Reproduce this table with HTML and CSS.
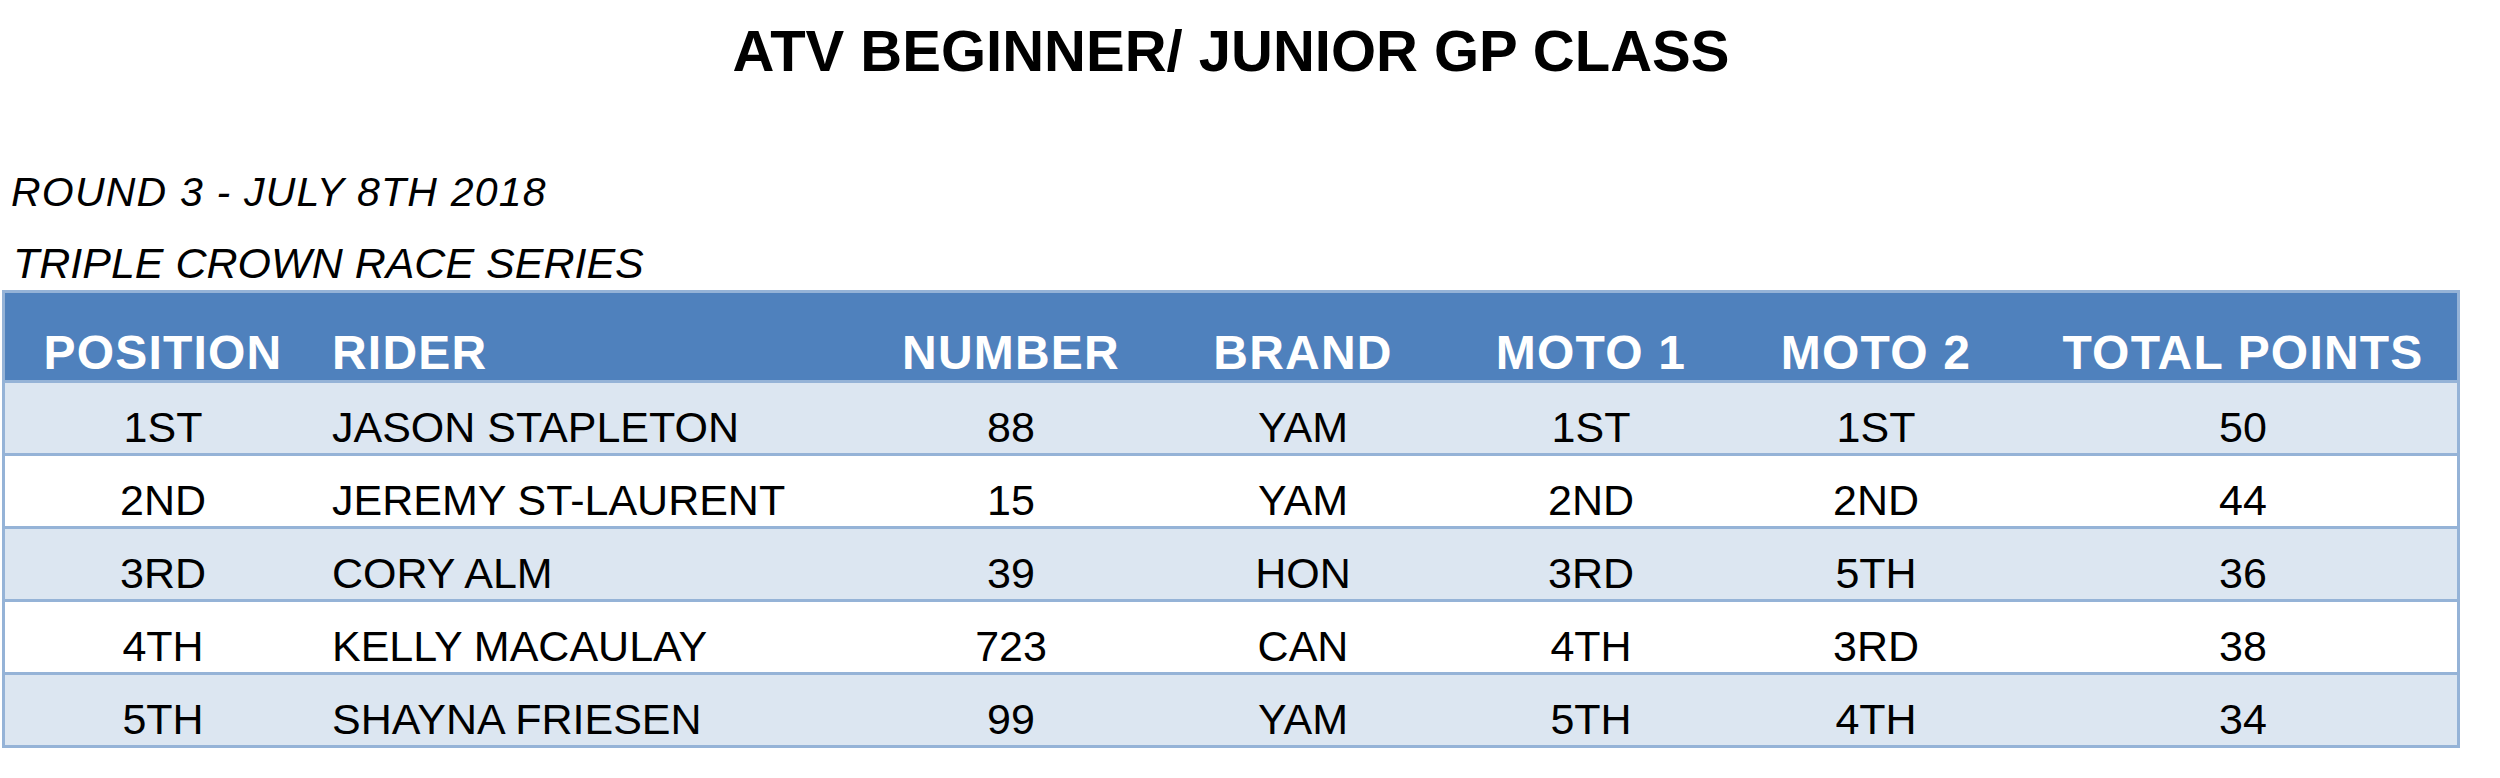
FILE: index.html
```html
<!DOCTYPE html>
<html lang="en">
<head>
<meta charset="utf-8">
<title>ATV Beginner/ Junior GP Class</title>
<link rel="stylesheet" href="styles.css">
</head>
<body>
<div class="page">
  <h1 class="title">ATV BEGINNER/ JUNIOR GP CLASS</h1>
  <p class="sub sub-round">ROUND 3 - JULY 8TH 2018</p>
  <p class="sub sub-series">TRIPLE CROWN RACE SERIES</p>
  <div class="results">
    <div class="row head">
      <div class="cell c">POSITION</div>
      <div class="cell l">RIDER</div>
      <div class="cell c">NUMBER</div>
      <div class="cell c">BRAND</div>
      <div class="cell c">MOTO 1</div>
      <div class="cell c">MOTO 2</div>
      <div class="cell c last">TOTAL POINTS</div>
    </div>
    <div class="row body alt">
      <div class="cell c">1ST</div>
      <div class="cell l">JASON STAPLETON</div>
      <div class="cell c">88</div>
      <div class="cell c">YAM</div>
      <div class="cell c">1ST</div>
      <div class="cell c">1ST</div>
      <div class="cell c last">50</div>
    </div>
    <div class="row body">
      <div class="cell c">2ND</div>
      <div class="cell l">JEREMY ST-LAURENT</div>
      <div class="cell c">15</div>
      <div class="cell c">YAM</div>
      <div class="cell c">2ND</div>
      <div class="cell c">2ND</div>
      <div class="cell c last">44</div>
    </div>
    <div class="row body alt">
      <div class="cell c">3RD</div>
      <div class="cell l">CORY ALM</div>
      <div class="cell c">39</div>
      <div class="cell c">HON</div>
      <div class="cell c">3RD</div>
      <div class="cell c">5TH</div>
      <div class="cell c last">36</div>
    </div>
    <div class="row body">
      <div class="cell c">4TH</div>
      <div class="cell l">KELLY MACAULAY</div>
      <div class="cell c">723</div>
      <div class="cell c">CAN</div>
      <div class="cell c">4TH</div>
      <div class="cell c">3RD</div>
      <div class="cell c last">38</div>
    </div>
    <div class="row body alt">
      <div class="cell c">5TH</div>
      <div class="cell l">SHAYNA FRIESEN</div>
      <div class="cell c">99</div>
      <div class="cell c">YAM</div>
      <div class="cell c">5TH</div>
      <div class="cell c">4TH</div>
      <div class="cell c last">34</div>
    </div>
  </div>
</div>
</body>
</html>
```
FILE: styles.css
```css
html, body {
  margin: 0;
  padding: 0;
  background: #ffffff;
}

body {
  font-family: "Liberation Sans", Arial, sans-serif;
  color: #000000;
}

.page {
  width: 2458px;
  margin-left: 2px;
  display: flex;
  flex-direction: column;
}

.title {
  margin: 22px 0 0 0;
  font-size: 58px;
  line-height: 58px;
  font-weight: bold;
  text-align: center;
}

.sub {
  margin: 0;
  padding-left: 9px;
  font-style: italic;
  font-weight: normal;
}

.sub-round {
  margin-top: 92px;
  font-size: 41px;
  line-height: 40px;
  letter-spacing: 1.2px;
}

.sub-series {
  margin-top: 30px;
  font-size: 43px;
  line-height: 42px;
  padding-left: 11px;
}

.results {
  margin-top: 6px;
  border: 3px solid #95b3d7;
  display: flex;
  flex-direction: column;
}

.row {
  display: grid;
  grid-template-columns: 316px 545px 290px 294px 282px 288px 437px;
}

.row.head {
  height: 87px;
  background: #4f81bd;
  color: #ffffff;
  font-weight: bold;
  font-size: 48px;
  line-height: 47px;
  letter-spacing: 1.2px;
}

.row.body {
  height: 70px;
  border-top: 3px solid #95b3d7;
  background: #ffffff;
  font-size: 43px;
  line-height: 42px;
}

.row.body.alt {
  background: #dce6f1;
}

.cell {
  display: flex;
  align-items: flex-end;
  white-space: nowrap;
}

.head .cell {
  padding-bottom: 4px;
}

.body .cell {
  padding-bottom: 5px;
}

.cell.c {
  justify-content: center;
}

.cell.l {
  justify-content: flex-start;
  padding-left: 11px;
}

.cell.last {
  padding-left: 9px;
}
```
